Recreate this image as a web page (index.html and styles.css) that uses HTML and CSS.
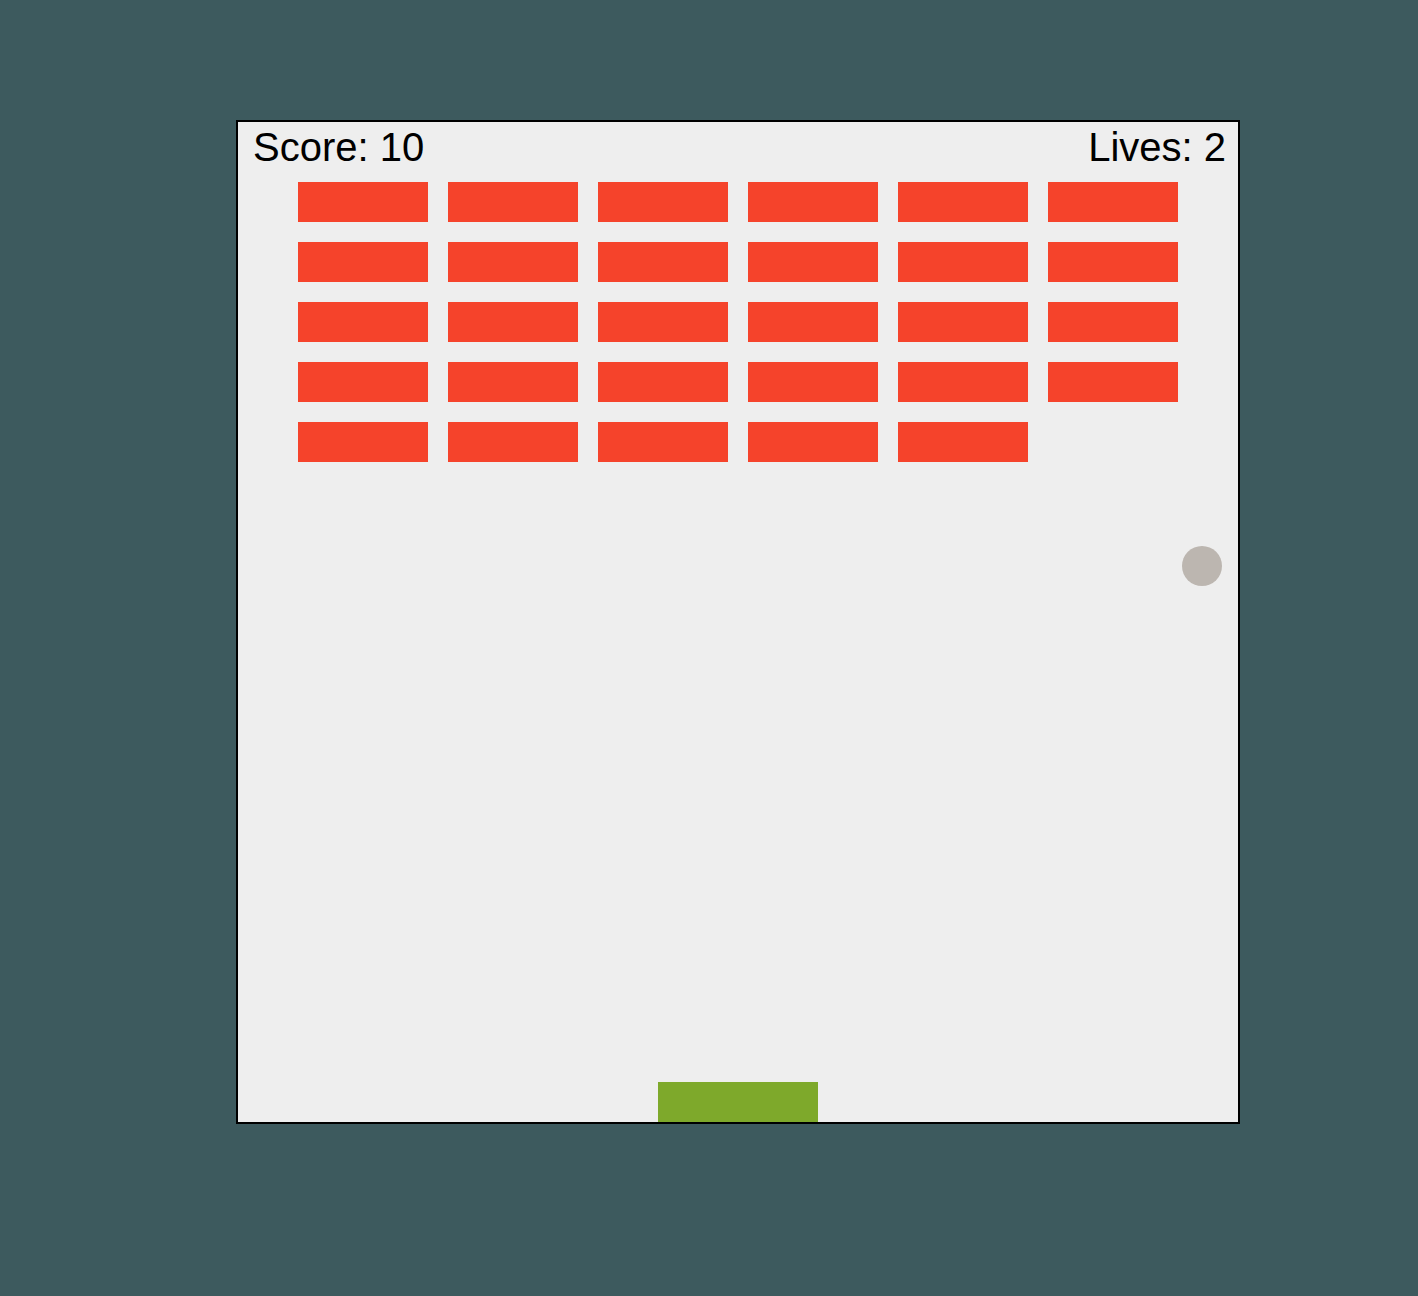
FILE: index.html
```html
<!DOCTYPE html>
<html lang="en">
<head>
<meta charset="utf-8">
<title>Breakout</title>
<link rel="stylesheet" href="styles.css">
</head>
<body>
<div class="board">
  <div class="hud">
    <span class="score">Score: 10</span>
    <span class="lives">Lives: 2</span>
  </div>
  <div class="bricks">
    <div class="brick"></div><div class="brick"></div><div class="brick"></div><div class="brick"></div><div class="brick"></div><div class="brick"></div>
    <div class="brick"></div><div class="brick"></div><div class="brick"></div><div class="brick"></div><div class="brick"></div><div class="brick"></div>
    <div class="brick"></div><div class="brick"></div><div class="brick"></div><div class="brick"></div><div class="brick"></div><div class="brick"></div>
    <div class="brick"></div><div class="brick"></div><div class="brick"></div><div class="brick"></div><div class="brick"></div><div class="brick"></div>
    <div class="brick"></div><div class="brick"></div><div class="brick"></div><div class="brick"></div><div class="brick"></div>
  </div>
  <div class="ball"></div>
  <div class="paddle"></div>
</div>
</body>
</html>
```

FILE: styles.css
```css
html, body {
  margin: 0;
  padding: 0;
}
body {
  background: #3d5a5e;
  min-height: 1296px;
  padding-top: 120px;
  padding-left: 236px;
  box-sizing: border-box;
  font-family: "Liberation Sans", Arial, sans-serif;
}
.board {
  position: relative;
  width: 1000px;
  height: 1000px;
  border: 2px solid #000;
  background: #eeeeee;
}
.hud {
  display: flex;
  justify-content: space-between;
  height: 60px;
  box-sizing: border-box;
  padding: 5px 12px 0 15px;
  font-size: 40px;
  line-height: 40px;
  color: #000;
}
.bricks {
  display: grid;
  grid-template-columns: repeat(6, 130px);
  grid-auto-rows: 40px;
  gap: 20px;
  margin-left: 60px;
}
.brick {
  background: #f5432b;
}
.ball {
  position: absolute;
  left: 944px;
  top: 424px;
  width: 40px;
  height: 40px;
  border-radius: 50%;
  background: #bcb6b0;
}
.paddle {
  position: absolute;
  left: 420px;
  bottom: 0;
  width: 160px;
  height: 40px;
  background: #7ea92b;
}
```
